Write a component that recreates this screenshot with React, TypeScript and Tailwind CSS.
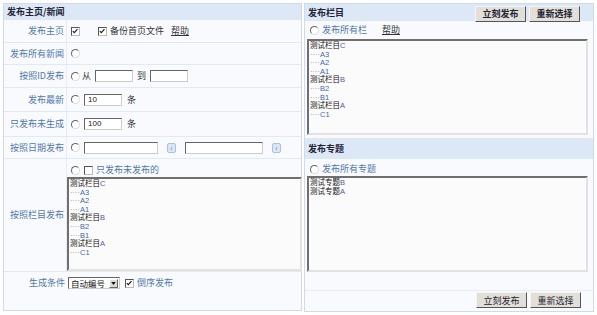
import React from "react";

const F = { fontFamily: '"Noto Sans CJK SC", "Noto Sans", sans-serif' };
const L = { fontFamily: '"Liberation Sans", "Noto Sans CJK SC", sans-serif' };

function Radio() {
  return (
    <span className="inline-block w-[9px] h-[9px] rounded-full border border-t-[#666] border-l-[#666] border-r-[#ddd] border-b-[#ddd] bg-white shrink-0" />
  );
}

function Check({ checked = true }: { checked?: boolean }) {
  return (
    <span className="relative inline-block w-[9px] h-[9px] border border-t-[#555] border-l-[#555] border-r-[#bbb] border-b-[#bbb] bg-white shrink-0">
      {checked && (
        <svg viewBox="0 0 9 9" className="absolute left-0 top-0 w-[7px] h-[7px]">
          <path d="M1 4 L3 6 L7 1.5" stroke="#222" strokeWidth="1.6" fill="none" />
        </svg>
      )}
    </span>
  );
}

function Box({ w, text = "" }: { w: string; text?: string }) {
  return (
    <span
      style={L}
      className={`${w} inline-block h-[12px] border border-t-[#666] border-l-[#666] border-r-[#ccc] border-b-[#ccc] bg-white text-[8px] leading-[10px] pl-[3px] text-[#222] shrink-0`}
    >
      {text}
    </span>
  );
}

function Cal() {
  return (
    <span className="inline-flex items-center justify-center w-[9px] h-[10px] rounded-[2px] border border-[#a9c2de] bg-[#dbe7f5] text-[#5577aa] text-[8px] leading-none shrink-0">
      ‹
    </span>
  );
}

function Btn({ children }: { children: React.ReactNode }) {
  return (
    <span className="inline-flex items-center justify-center w-[51px] h-[16px] bg-[#e2dfd8] border border-t-[#f5f5f5] border-l-[#f5f5f5] border-r-[#555] border-b-[#555] text-[9px] text-[#223] leading-none">
      {children}
    </span>
  );
}

function Row({ label, h, children }: { label: string; h: string; children?: React.ReactNode }) {
  return (
    <div className={`flex ${h} border-b border-[#e1e9f3]`}>
      <div className="w-[63px] shrink-0 flex items-center justify-end pr-[2px] text-[9px] text-[#5278aa] border-r border-[#e6edf5]">
        {label}
      </div>
      <div className="flex items-center pl-[4px] gap-[4px] text-[9px] text-[#333]">{children}</div>
    </div>
  );
}

type Item = { t: string; sub?: boolean };
const cats: Item[] = [
  { t: "测试栏目C" },
  { t: "A3", sub: true },
  { t: "A2", sub: true },
  { t: "A1", sub: true },
  { t: "测试栏目B" },
  { t: "B2", sub: true },
  { t: "B1", sub: true },
  { t: "测试栏目A" },
  { t: "C1", sub: true },
];

function List({ items, cls }: { items: Item[]; cls: string }) {
  return (
    <div
      style={L}
      className={`${cls} border-2 border-t-[#6f6f6f] border-l-[#6f6f6f] border-r-[#e2e2e2] border-b-[#e2e2e2] bg-[#fbfbfb] pt-[1px] pl-[1px] text-[7.5px] leading-[8.6px]`}
    >
      {items.map((it, i) => (
        <div key={i} className="whitespace-nowrap">
          {it.sub ? (
            <>
              <span className="text-[#888]">····</span>
              <span className="text-[#4466aa]">{it.t}</span>
            </>
          ) : (
            <>
              <span className="text-[#111]">{it.t.slice(0, -1)}</span>
              <span className="text-[#5a56a0]">{it.t.slice(-1)}</span>
            </>
          )}
        </div>
      ))}
    </div>
  );
}

export default function App() {
  return (
    <div style={F} className="w-[597px] h-[315px] bg-white flex gap-[2px] pl-[3px] pt-[3px]">
      {/* Left panel */}
      <div className="w-[299px] h-[308px] border border-[#cddced] bg-[#f8fafd] flex flex-col">
        <div className="h-[16px] bg-[#dce8f6] flex items-center pl-[3px] text-[9px] font-bold text-[#223]">
          发布主页/新闻
        </div>
        <Row label="发布主页" h="h-[23px]">
          <Check />
          <span className="w-[10px]" />
          <Check />
          <span className="-ml-[1px]">备份首页文件</span>
          <span className="ml-[3px] underline text-[#333]">帮助</span>
        </Row>
        <Row label="发布所有新闻" h="h-[22px]">
          <Radio />
        </Row>
        <Row label="按照ID发布" h="h-[23px]">
          <Radio />
          <span className="-ml-[2px]">从</span>
          <Box w="w-[38px]" />
          <span>到</span>
          <Box w="w-[38px]" />
        </Row>
        <Row label="发布最新" h="h-[24px]">
          <Radio />
          <Box w="w-[38px]" text="10" />
          <span className="ml-[1px]">条</span>
        </Row>
        <Row label="只发布未生成" h="h-[25px]">
          <Radio />
          <Box w="w-[38px]" text="100" />
          <span className="ml-[1px]">条</span>
        </Row>
        <Row label="按照日期发布" h="h-[22px]">
          <Radio />
          <Box w="w-[74px]" />
          <span className="w-[1px]" />
          <Cal />
          <span className="w-[1px]" />
          <Box w="w-[78px]" />
          <span className="w-[1px]" />
          <Cal />
        </Row>
        <div className="flex h-[113px] border-b border-[#e1e9f3]">
          <div className="w-[63px] shrink-0 flex items-center justify-end pr-[2px] text-[9px] text-[#5278aa] border-r border-[#e6edf5]">
            按照栏目发布
          </div>
          <div className="flex flex-col pt-[5px]">
            <div className="flex items-center gap-[4px] pl-[4px] h-[12px] text-[9px]">
              <Radio />
              <Check checked={false} />
              <span className="-ml-[1px] text-[#5278aa]">只发布未发布的</span>
            </div>
            <List items={cats} cls="mt-[1px] w-[235px] h-[94px]" />
          </div>
        </div>
        <div className="flex h-[22px]">
          <div className="w-[63px] shrink-0 flex items-center justify-end pr-[2px] text-[9px] text-[#5278aa]">
            生成条件
          </div>
          <div className="flex items-center pl-[1px] gap-[5px] text-[9px]">
            <span className="inline-flex items-center w-[52px] h-[12px] border border-t-[#666] border-l-[#666] border-r-[#ccc] border-b-[#ccc] bg-white">
              <span className="flex-1 text-[8.5px] leading-none pl-[2px] text-[#111]">自动编号</span>
              <span className="w-[9px] h-[9px] mr-[1px] bg-[#dedbd4] border border-t-[#fff] border-l-[#fff] border-r-[#666] border-b-[#666] flex items-center justify-center">
                <svg viewBox="0 0 6 4" className="w-[5px] h-[3px]">
                  <path d="M0 0 H6 L3 4 Z" fill="#111" />
                </svg>
              </span>
            </span>
            <Check />
            <span className="-ml-[2px] text-[#5278aa]">倒序发布</span>
          </div>
        </div>
      </div>

      {/* Right panel */}
      <div className="w-[290px] h-[309px] border border-[#cddced] bg-[#f8fafd] flex flex-col">
        <div className="h-[17px] bg-[#dce8f6] flex items-center pl-[3px] pr-[13px] text-[9px] font-bold text-[#223]">
          <span className="flex-1">发布栏目</span>
          <div className="flex gap-[3px] mt-[2px]">
            <Btn>立刻发布</Btn>
            <Btn>重新选择</Btn>
          </div>
        </div>
        <div className="flex items-center h-[18px] pl-[5px] gap-[3px] text-[9px] text-[#5278aa]">
          <Radio />
          <span>发布所有栏</span>
          <span className="ml-[12px] underline text-[#333]">帮助</span>
        </div>
        <List items={cats} cls="ml-[2px] w-[281px] h-[96px]" />
        <div className="mt-[3px] h-[21px] bg-[#dce8f6] flex items-center pl-[3px] text-[9px] font-bold text-[#223]">
          发布专题
        </div>
        <div className="flex items-center h-[17px] pl-[5px] pt-[3px] gap-[3px] text-[9px] text-[#5278aa]">
          <Radio />
          <span>发布所有专题</span>
        </div>
        <List
          items={[{ t: "测试专题B" }, { t: "测试专题A" }]}
          cls="ml-[2px] w-[281px] h-[96px]"
        />
        <div className="flex-1 flex items-end justify-end pr-[12px] pb-[3px] gap-[3px] border-t border-[#e6edf5] mt-[18px]">
          <Btn>立刻发布</Btn>
          <Btn>重新选择</Btn>
        </div>
      </div>
    </div>
  );
}
